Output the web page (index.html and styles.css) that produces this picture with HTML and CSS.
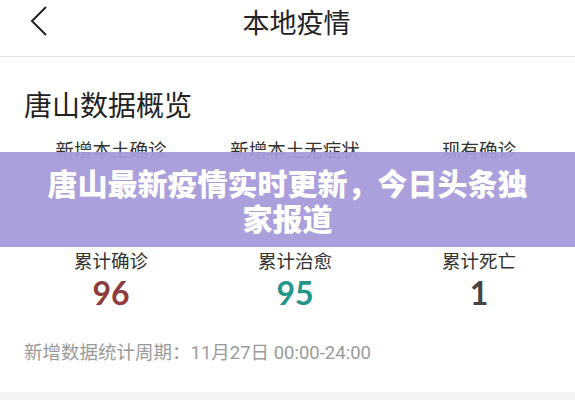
FILE: index.html
```html
<!DOCTYPE html>
<html lang="zh-CN">
<head>
<meta charset="utf-8">
<link rel="stylesheet" href="styles.css">
</head>
<body>
<div class="page">
  <header class="header">
    <div class="back">
      <svg width="18" height="30" viewBox="0 0 18 30"><polyline points="16,1 2,15 16,29" fill="none" stroke="#222" stroke-width="2"/></svg>
    </div>
    <div class="title">本地疫情</div>
    <div></div>
  </header>
  <main class="content">
    <h2 class="section-title">唐山数据概览</h2>
    <div class="stats">
      <div class="stat"><div class="label">新增本土确诊</div><div class="num red"></div></div>
      <div class="stat"><div class="label">新增本土无症状</div><div class="num teal"></div></div>
      <div class="stat"><div class="label">现有确诊</div><div class="num gray"></div></div>
      <div class="stat"><div class="label">累计确诊</div><div class="num red">96</div></div>
      <div class="stat"><div class="label">累计治愈</div><div class="num teal">95</div></div>
      <div class="stat"><div class="label">累计死亡</div><div class="num gray">1</div></div>
    </div>
    <p class="period">新增数据统计周期：11月27日 00:00-24:00</p>
  </main>
  <div class="bottom-band"></div>
  <div class="banner"><div class="banner-text">唐山最新疫情实时更新，今日头条独家报道</div></div>
</div>
</body>
</html>
```
FILE: styles.css
```css
html, body {
  margin: 0;
  padding: 0;
  background: #fff;
}
.page {
  position: relative;
  width: 575px;
  height: 400px;
  overflow: hidden;
  font-family: "Noto Sans CJK SC", "Noto Sans", sans-serif;
  color: #222;
  display: flex;
  flex-direction: column;
}
.header {
  height: 56px;
  border-bottom: 1px solid #e4e4e4;
  display: grid;
  grid-template-columns: 1fr auto 1fr;
  align-items: start;
}
.back {
  padding: 6px 0 0 30px;
  line-height: 0;
}
.title {
  font-size: 27px;
  line-height: 28px;
  padding: 8px 0 0 18px;
  color: #222;
}
.content {
  padding: 0 0 0 24px;
  flex: 1;
}
.section-title {
  margin: 31px 0 0 0;
  font-size: 28px;
  line-height: 32px;
  font-weight: 400;
  color: #222;
}
.stats {
  display: grid;
  grid-template-columns: repeat(3, 184px);
  margin: 18px 0 0 -5px;
  row-gap: 50px;
}
.stat {
  display: flex;
  flex-direction: column;
  align-items: center;
}
.label {
  font-size: 18.5px;
  line-height: 22px;
  color: #333;
}
.num {
  margin-top: 5px;
  height: 34px;
  font-family: "Lato", "Open Sans", sans-serif;
  font-size: 32px;
  line-height: 34px;
  font-weight: 700;
}
.red { color: #8e3b3b; }
.teal { color: #23958a; }
.gray { color: #444; }
.period {
  margin: 32px 0 0 0;
  font-family: "Roboto", "Noto Sans CJK SC", sans-serif;
  font-size: 18.5px;
  line-height: 22px;
  color: #9a9a9a;
}
.bottom-band {
  height: 8px;
  background: #f4f2f2;
}
.banner {
  position: absolute;
  left: 0;
  top: 152px;
  width: 575px;
  height: 95px;
  box-sizing: border-box;
  padding-top: 13px;
  background: rgba(166, 154, 218, 0.94);
}
.banner-text {
  width: 486px;
  margin: 0 auto;
  text-align: center;
  color: #fff;
  font-size: 30px;
  line-height: 35px;
  font-weight: 900;
}
```
